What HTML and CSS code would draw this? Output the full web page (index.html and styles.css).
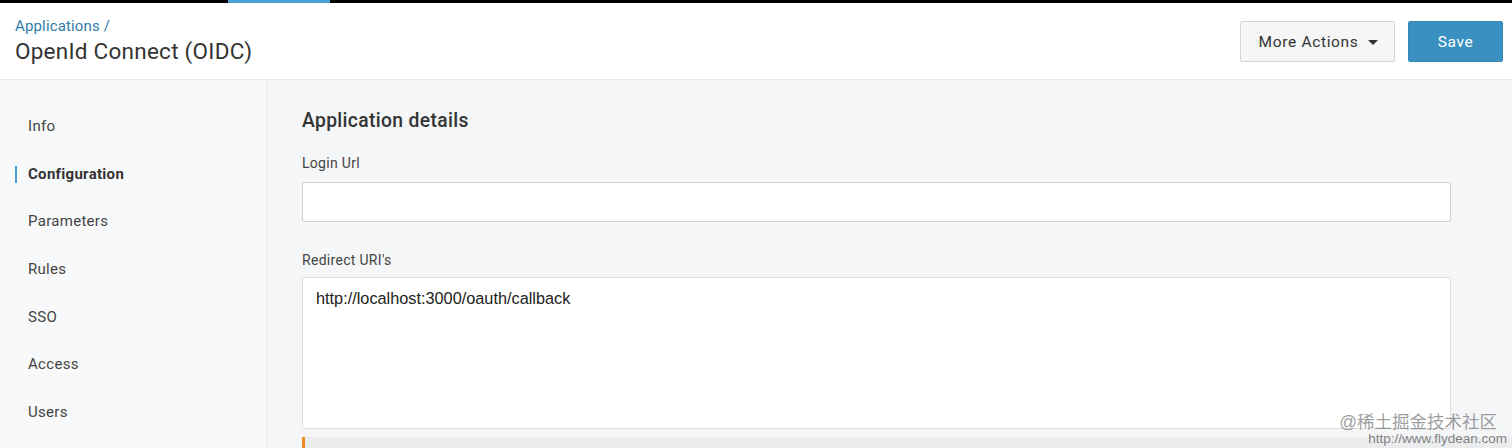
FILE: index.html
```html
<!DOCTYPE html>
<html>
<head>
<meta charset="utf-8">
<link rel="stylesheet" href="styles.css">
</head>
<body>
<div class="topbar"><div class="topbar-accent"></div></div>
<header class="header">
  <div class="titles">
    <a class="crumb">Applications /</a>
    <h1 class="title">OpenId Connect (OIDC)</h1>
  </div>
  <div class="actions">
    <button class="btn btn-more">More Actions <span class="caret"></span></button>
    <button class="btn btn-save">Save</button>
  </div>
</header>
<div class="body">
  <nav class="sidebar">
    <a class="nav-item">Info</a>
    <a class="nav-item active">Configuration</a>
    <a class="nav-item">Parameters</a>
    <a class="nav-item">Rules</a>
    <a class="nav-item">SSO</a>
    <a class="nav-item">Access</a>
    <a class="nav-item">Users</a>
  </nav>
  <main class="main">
    <h2 class="section-title">Application details</h2>
    <label class="field-label">Login Url</label>
    <div class="input"></div>
    <label class="field-label field-label-2">Redirect URI's</label>
    <div class="textarea">http://localhost:3000/oauth/callback</div>
    <div class="notice"></div>
  </main>
</div>
<div class="watermark">
  <div class="wm-1">@稀土掘金技术社区</div>
  <div class="wm-2">http://www.flydean.com</div>
</div>
</body>
</html>
```
FILE: styles.css
```css
* { box-sizing: border-box; }
html, body { margin: 0; padding: 0; }
body {
  font-family: Roboto, "Noto Sans", "Noto Sans CJK SC", sans-serif;
  color: #333;
  background: #f5f6f8;
  width: 1512px;
  height: 448px;
  overflow: hidden;
  position: relative;
}
.topbar { height: 3px; background: #000; }
.topbar-accent { margin-left: 228px; width: 102px; height: 3px; background: #4a9fd4; }
.header {
  height: 77px;
  background: #fff;
  border-bottom: 1px solid #e8e9eb;
  display: flex;
  justify-content: space-between;
  align-items: flex-start;
  padding: 0 9px 0 15px;
}
.titles { padding-top: 14px; }
.crumb { display: block; color: #2f7ca6; font-size: 15px; line-height: 18px; letter-spacing: 0.15px; }
.title { margin: 2px 0 0; font-weight: 400; font-size: 22.5px; line-height: 28px; color: #333; letter-spacing: 0.25px; }
.actions { display: flex; gap: 13px; padding-top: 18px; }
.btn {
  height: 41px;
  font-family: Roboto, sans-serif;
  font-size: 15.5px;
  letter-spacing: 0.65px;
  border-radius: 2px;
  cursor: pointer;
}
.btn-more {
  width: 155px;
  background: #f5f6f6;
  border: 1px solid #d4d5d7;
  color: #333;
  display: flex; align-items: center; justify-content: center; gap: 10px;
  padding: 0 0 0 2px;
}
.caret {
  width: 0; height: 0;
  border-left: 5px solid transparent;
  border-right: 5px solid transparent;
  border-top: 5px solid #333;
  margin-top: 1px;
}
.btn-save {
  width: 95px;
  background: #3a90c0;
  border: 1px solid #3a8ab8;
  color: #fff;
}
.body { display: flex; height: 368px; }
.sidebar {
  width: 267px;
  flex: none;
  background: #f8f9fa;
  border-right: 1px solid #eceef0;
  padding-top: 36px;
  display: flex; flex-direction: column;
}
.nav-item {
  position: relative;
  height: 47.7px;
  flex: none;
  padding-left: 28px;
  font-size: 15px;
  line-height: 20px;
  color: #444;
  letter-spacing: 0.3px;
}
.nav-item.active { font-weight: 700; color: #333; letter-spacing: 0.3px; }
.nav-item.active::before {
  content: "";
  position: absolute;
  left: 15px; top: 2px;
  width: 2px; height: 17px;
  background: #4a9fd4;
}
.main { flex: 1; padding: 29px 61px 0 35px; display: flex; flex-direction: column; }
.main > * { flex: none; }
.section-title { margin: 0; font-size: 19.3px; font-weight: 500; line-height: 24px; color: #333; letter-spacing: 0.35px; }
.field-label { display: block; margin-top: 21px; font-size: 14px; line-height: 18px; color: #444; letter-spacing: 0.3px; }
.field-label-2 { margin-top: 29px; }
.input {
  margin-top: 10px;
  height: 40px;
  background: #fff;
  border: 1px solid #cdcfd1;
  border-radius: 2px;
}
.textarea {
  margin-top: 8px;
  height: 152px;
  background: #fff;
  border: 1px solid #dcdee0;
  border-radius: 2px;
  padding: 10px 13px;
  font-family: "Liberation Sans", Arial, sans-serif;
  font-size: 16.3px;
  line-height: 20px;
  color: #222;
}
.notice {
  margin-top: 8px;
  height: 20px;
  background: #ebecee;
  border-left: 3px solid #f08a24;
  margin-right: -61px;
}
.watermark {
  position: absolute;
  right: 15px;
  bottom: 2px;
  text-align: right;
  font-family: "Liberation Sans", "Noto Sans CJK SC", sans-serif;
}
.wm-1 { font-size: 17.5px; line-height: 19px; color: rgba(90,90,90,0.6); }
.wm-2 { font-size: 13.5px; line-height: 14px; margin-right: -10px; color: rgba(90,90,90,0.75); }
```
